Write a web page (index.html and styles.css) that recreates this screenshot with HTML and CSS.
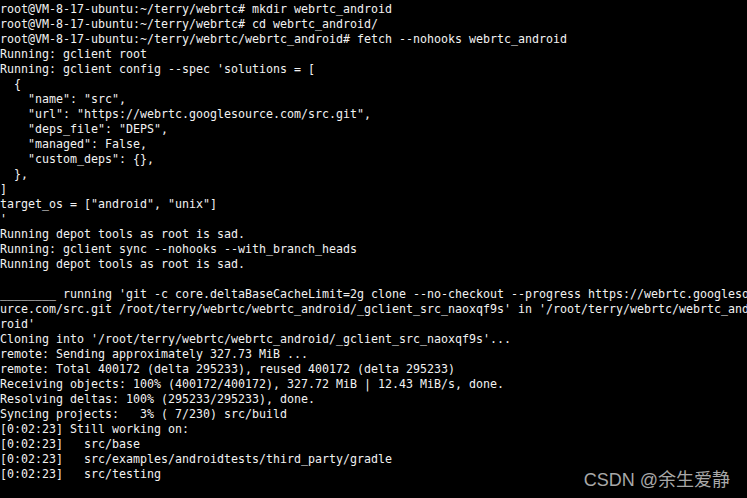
FILE: index.html
```html
<!DOCTYPE html>
<html>
<head>
<meta charset="utf-8">
<title>terminal</title>
<link rel="stylesheet" href="styles.css">
</head>
<body>
<div class="term">
<div class="ln">root@VM-8-17-ubuntu:~/terry/webrtc# mkdir webrtc_android</div>
<div class="ln">root@VM-8-17-ubuntu:~/terry/webrtc# cd webrtc_android/</div>
<div class="ln">root@VM-8-17-ubuntu:~/terry/webrtc/webrtc_android# fetch --nohooks webrtc_android</div>
<div class="ln">Running: gclient root</div>
<div class="ln">Running: gclient config --spec 'solutions = [</div>
<div class="ln">  {</div>
<div class="ln">    "name": "src",</div>
<div class="ln">    "url": "https://webrtc.googlesource.com/src.git",</div>
<div class="ln">    "deps_file": "DEPS",</div>
<div class="ln">    "managed": False,</div>
<div class="ln">    "custom_deps": {},</div>
<div class="ln">  },</div>
<div class="ln">]</div>
<div class="ln">target_os = ["android", "unix"]</div>
<div class="ln">'</div>
<div class="ln">Running depot tools as root is sad.</div>
<div class="ln">Running: gclient sync --nohooks --with_branch_heads</div>
<div class="ln">Running depot tools as root is sad.</div>
<div class="ln"> </div>
<div class="ln">________ running 'git -c core.deltaBaseCacheLimit=2g clone --no-checkout --progress https://webrtc.googleso</div>
<div class="ln">urce.com/src.git /root/terry/webrtc/webrtc_android/_gclient_src_naoxqf9s' in '/root/terry/webrtc/webrtc_and</div>
<div class="ln">roid'</div>
<div class="ln">Cloning into '/root/terry/webrtc/webrtc_android/_gclient_src_naoxqf9s'...</div>
<div class="ln">remote: Sending approximately 327.73 MiB ...</div>
<div class="ln">remote: Total 400172 (delta 295233), reused 400172 (delta 295233)</div>
<div class="ln">Receiving objects: 100% (400172/400172), 327.72 MiB | 12.43 MiB/s, done.</div>
<div class="ln">Resolving deltas: 100% (295233/295233), done.</div>
<div class="ln">Syncing projects:   3% ( 7/230) src/build</div>
<div class="ln">[0:02:23] Still working on:</div>
<div class="ln">[0:02:23]   src/base</div>
<div class="ln">[0:02:23]   src/examples/androidtests/third_party/gradle</div>
<div class="ln">[0:02:23]   src/testing</div>
</div>
<div class="mark">CSDN @余生爱静</div>
</body>
</html>
```
FILE: styles.css
```css
html, body {
  margin: 0;
  padding: 0;
  background: #000;
  width: 747px;
  height: 498px;
  overflow: hidden;
}
.term {
  display: flex;
  flex-direction: column;
  padding: 2px 0 0 0;
  width: 747px;
  overflow: hidden;
}
.ln {
  font-family: "DejaVu Sans Mono", monospace;
  font-size: 11.63px;
  line-height: 15px;
  height: 15px;
  color: #f2f2f2;
  white-space: pre;
  overflow: hidden;
}
.mark {
  position: absolute;
  right: 17px;
  bottom: 8px;
  font-family: "Liberation Sans", "Noto Sans CJK SC", sans-serif;
  font-size: 18px;
  line-height: 20px;
  color: #a8a8a8;
}
```
